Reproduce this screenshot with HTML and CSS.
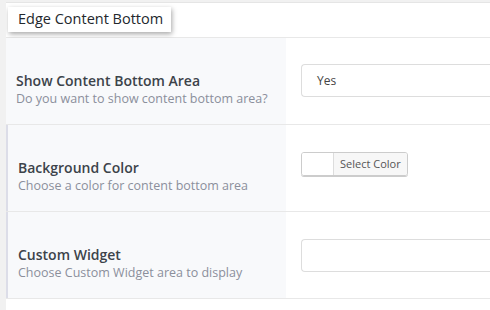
FILE: index.html
```html
<!DOCTYPE html>
<html lang="en">
<head>
  <meta charset="UTF-8" />
  <title>Edge Content Bottom</title>
  <link rel="stylesheet" href="styles.css">
</head>
<body>
  <div class="panel">
    <div class="panel-head">
      <h3 class="panel-title">Edge Content Bottom</h3>
    </div>

    <div class="field">
      <div class="field-label">
        <div class="label-title">Show Content Bottom Area</div>
        <div class="label-desc">Do you want to show content bottom area?</div>
      </div>
      <div class="field-control">
        <div class="select">Yes</div>
      </div>
    </div>

    <div class="field marked">
      <div class="field-label">
        <div class="label-title">Background Color</div>
        <div class="label-desc">Choose a color for content bottom area</div>
      </div>
      <div class="field-control">
        <div class="color-pick">
          <span class="swatch"></span>
          <span class="color-btn">Select Color</span>
        </div>
      </div>
    </div>

    <div class="field marked">
      <div class="field-label">
        <div class="label-title">Custom Widget</div>
        <div class="label-desc">Choose Custom Widget area to display</div>
      </div>
      <div class="field-control">
        <div class="select"></div>
      </div>
    </div>
  </div>
</body>
</html>
```

FILE: styles.css
```css
body {
  margin: 0;
  font-family: 'Open Sans', sans-serif;
  background: #f1f1f1;
  height: 310px;
  overflow: hidden;
}
.panel {
  margin: 2px 0 0 6px;
  background: #fff;
  border-top: 1px solid #e5e5e5;
  height: 307px;
  overflow: hidden;
}
.panel-head {
  height: 35px;
  border-bottom: 1px solid #e8e8e8;
  padding: 4px 0 0 2px;
  box-sizing: border-box;
}
.panel-title {
  display: inline-block;
  margin: 0;
  padding: 3px 8px 4px 10px;
  font-size: 14.5px;
  line-height: 18px;
  font-weight: 400;
  color: #23282d;
  background: #fff;
  box-shadow: 1px 2px 5px rgba(0, 0, 0, 0.35);
}
.field {
  display: flex;
  height: 87px;
  border-bottom: 1px solid #e8e8e8;
  box-sizing: border-box;
}
.field-label {
  width: 280px;
  background: #f8f9fb;
  padding: 33px 0 0 10px;
  box-sizing: border-box;
}
.field.marked .field-label {
  border-left: 2px solid #dcdde8;
  padding-left: 10px;
}
.label-title {
  font-size: 14px;
  font-weight: 600;
  color: #3c434a;
  line-height: 19px;
}
.label-desc {
  font-size: 12.5px;
  color: #8b8f9b;
  line-height: 18px;
}
.field-control {
  flex: 1;
  padding: 26px 0 0 15px;
}
.select {
  height: 33px;
  box-sizing: border-box;
  border: 1px solid #ddd;
  border-right: none;
  border-radius: 4px 0 0 4px;
  font-size: 12px;
  color: #444;
  line-height: 31px;
  padding-left: 15px;
}
.field.marked .field-control {
  padding-top: 27px;
}
.color-pick {
  display: inline-flex;
  height: 24px;
  border: 1px solid #ccc;
  border-radius: 3px;
  box-sizing: border-box;
  overflow: hidden;
  box-shadow: 0 1px 0 #ccc;
}
.swatch {
  width: 31px;
  background: #fff;
  border-right: 1px solid #ddd;
}
.color-btn {
  background: #f7f7f7;
  font-size: 11px;
  color: #555;
  line-height: 22px;
  padding: 0 6px;
}
```
